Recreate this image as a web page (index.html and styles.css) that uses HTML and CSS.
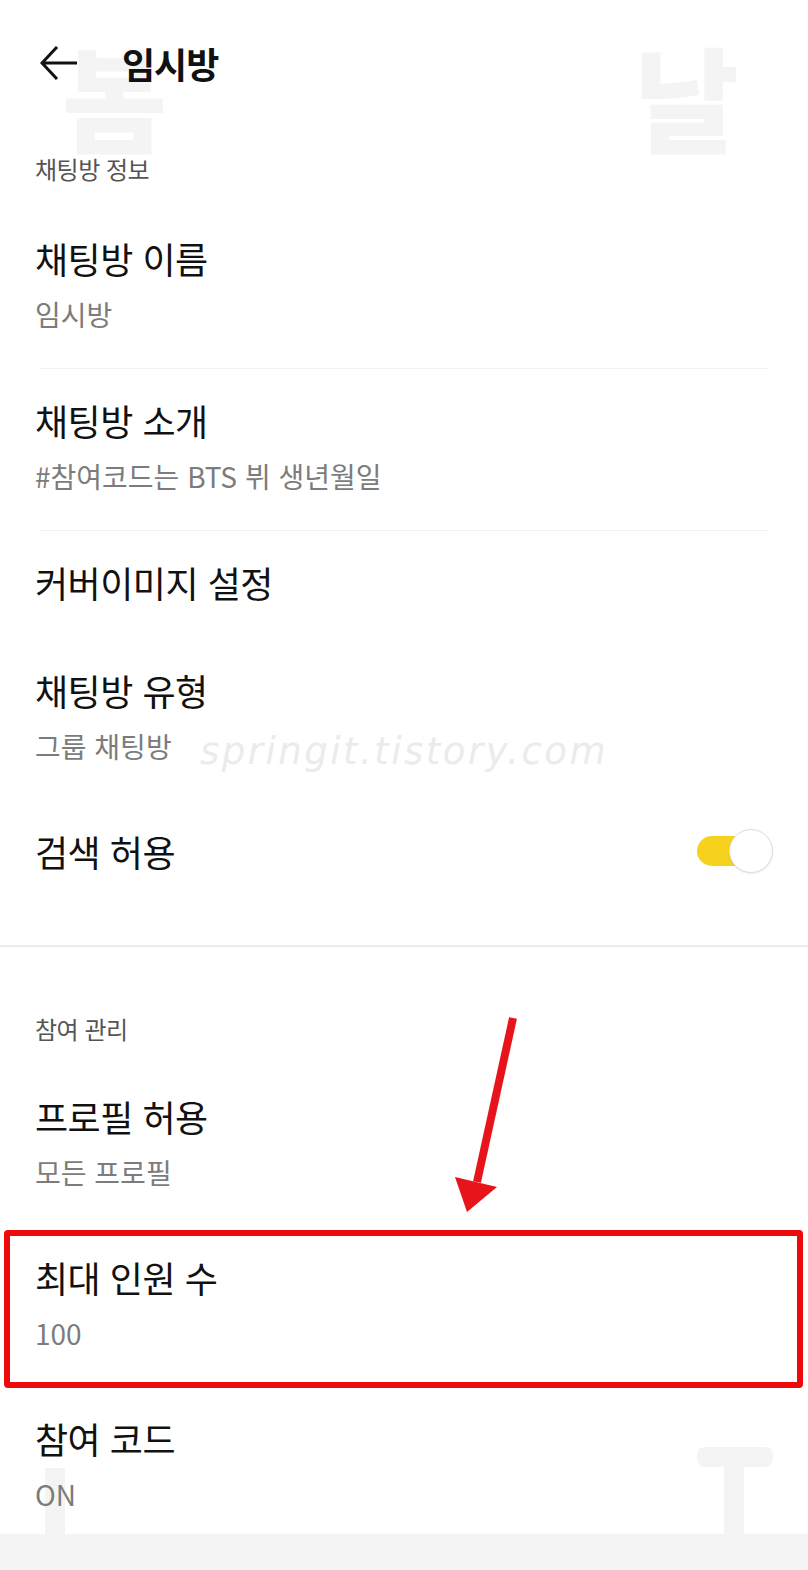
FILE: index.html
```html
<!DOCTYPE html>
<html lang="ko">
<head>
    <meta charset="UTF-8">
    <meta name="viewport" content="width=device-width, initial-scale=1.0">
    <title>임시방</title>
<link rel="stylesheet" href="styles.css">
</head>
<body>
<div class="screen">

  <!-- watermarks -->
  <span class="mark mark-bom">봄</span>
  <span class="mark mark-nal">날</span>
  <span class="mark-url">springit.tistory.com</span>
  <span class="mark-bar"></span>
  <span class="mark-t"><i></i></span>

  <header class="topbar">
    <button class="back" aria-label="뒤로">
      <svg width="38" height="34" viewBox="0 0 38 34">
        <path d="M17 1 L2 17 L17 33 M2 17 H37" fill="none" stroke="#111" stroke-width="3"/>
      </svg>
    </button>
    <h1>임시방</h1>
  </header>

  <h2 class="section-label first">채팅방 정보</h2>

  <div class="item">
    <div class="item-title">채팅방 이름</div>
    <div class="item-sub">임시방</div>
  </div>
  <hr class="rule">

  <div class="item">
    <div class="item-title">채팅방 소개</div>
    <div class="item-sub">#참여코드는 BTS 뷔 생년월일</div>
  </div>
  <hr class="rule">

  <div class="item single">
    <div class="item-title">커버이미지 설정</div>
  </div>

  <div class="item">
    <div class="item-title">채팅방 유형</div>
    <div class="item-sub">그룹 채팅방</div>
  </div>

  <div class="item toggle-row">
    <div class="item-title">검색 허용</div>
    <span class="switch on"><span class="knob"></span></span>
  </div>

  <div class="thick-rule"></div>

  <h2 class="section-label">참여 관리</h2>

  <div class="item">
    <div class="item-title">프로필 허용</div>
    <div class="item-sub">모든 프로필</div>
  </div>

  <div class="item highlighted">
    <div class="item-title">최대 인원 수</div>
    <div class="item-sub">100</div>
    <span class="red-box"></span>
  </div>

  <div class="item last">
    <div class="item-title">참여 코드</div>
    <div class="item-sub">ON</div>
  </div>

  <div class="bottom-bar"></div>

  <svg class="red-arrow" width="90" height="220" viewBox="440 1000 90 220">
    <line x1="513" y1="1018" x2="477" y2="1182" stroke="#e8141b" stroke-width="8"/>
    <polygon points="455,1177 497,1187 467,1212" fill="#e8141b"/>
  </svg>

</div>
</body>
</html>
```
FILE: styles.css
```css
* { box-sizing: border-box }

body {
  margin: 0;
  background: #fff;
  font-family: "Noto Sans CJK KR", "Noto Sans", sans-serif;
  color: #111;
}

.screen {
  position: relative;
  z-index: 0;
  width: 808px;
  min-height: 1570px;
  background: #fff;
  overflow: hidden;
}

/* header */
.topbar {
  display: flex;
  align-items: center;
  gap: 44px;
  padding: 41px 0 0 40px;
  height: 85px;
}

.back {
  background: transparent;
  border: 0;
  padding: 0;
  width: 38px;
  height: 34px;
  cursor: pointer;
}

.back svg {
  display: block;
}

.topbar h1 {
  margin: 0;
  font-size: 36px;
  line-height: 44px;
  font-weight: 700;
  letter-spacing: -1px;
}

/* section labels */
.section-label {
  margin: 68px 0 22px;
  padding-left: 35px;
  font-size: 24px;
  line-height: 28px;
  font-weight: 400;
  color: #555;
  letter-spacing: -0.5px;
}

.section-label.first {
  margin-top: 70px;
  margin-bottom: 24px;
}

/* rows */
.item {
  position: relative;
  padding: 29px 35px 38px;
}

.item.single {
  padding-bottom: 35px;
}

.item.last {
  padding-bottom: 24px;
}

.item-title {
  font-size: 36px;
  line-height: 44px;
  letter-spacing: -0.5px;
  color: #111;
}

.item-sub {
  margin-top: 18px;
  font-size: 28px;
  line-height: 32px;
  color: #7c7c7c;
}

.rule {
  margin: 0 40px;
  border: 0;
  height: 1px;
  background: #f1f1f1;
}

.thick-rule {
  height: 2px;
  background: #ebebeb;
}

/* toggle */
.toggle-row {
  display: flex;
  align-items: center;
  justify-content: space-between;
  padding-bottom: 72px;
}

.switch {
  position: relative;
  display: block;
  width: 76px;
  height: 44px;
}

.switch::before {
  content: "";
  position: absolute;
  left: 0;
  top: 7px;
  width: 56px;
  height: 30px;
  border-radius: 15px;
  background: #f6d21c;
}

.knob {
  position: absolute;
  right: 0;
  top: 0;
  width: 44px;
  height: 44px;
  border-radius: 50%;
  background: #fff;
  border: 1.5px solid #dcdcdc;
  box-shadow: 0 1px 2px rgba(0,0,0,0.08);
}

/* highlight */
.red-box {
  position: absolute;
  left: 4px;
  right: 5px;
  top: 4px;
  bottom: -1px;
  border: 6px solid #ee0a0a;
  border-radius: 4px;
}

.red-arrow {
  position: absolute;
  left: 440px;
  top: 1000px;
}

.bottom-bar {
  height: 36px;
  background: #f4f4f4;
}

/* watermarks */
.mark {
  position: absolute;
  z-index: -1;
  top: 38px;
  height: 114px;
  font-size: 114px;
  line-height: 1;
  font-weight: 900;
  color: #f4f4f4;
}

.mark-bom { left: 62px; }
.mark-nal { left: 634px; }

.mark-url {
  position: absolute;
  z-index: -1;
  left: 200px;
  top: 730px;
  font-family: "DejaVu Sans", sans-serif;
  font-style: italic;
  font-weight: 200;
  font-size: 37px;
  letter-spacing: 2.5px;
  color: #ebebeb;
}

.mark-bar {
  position: absolute;
  z-index: -1;
  left: 45px;
  top: 1468px;
  width: 20px;
  height: 70px;
  background: #f4f4f4;
}

.mark-t {
  position: absolute;
  z-index: -1;
  left: 697px;
  top: 1447px;
  width: 76px;
  height: 20px;
  border-radius: 8px;
  background: #f4f4f4;
}

.mark-t i {
  position: absolute;
  left: 27px;
  top: 10px;
  width: 20px;
  height: 80px;
  background: #f4f4f4;
}
```
